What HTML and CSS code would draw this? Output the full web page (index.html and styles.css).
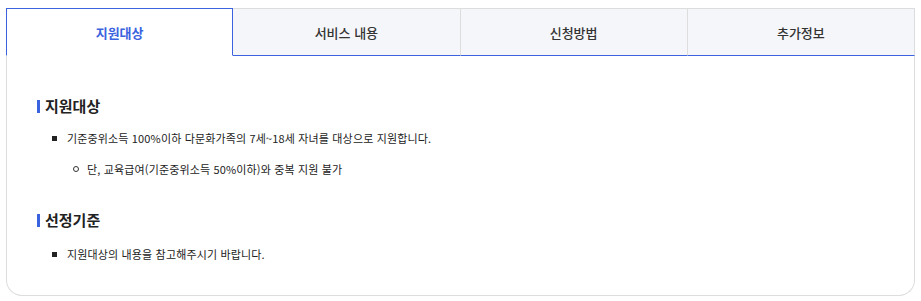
FILE: index.html
```html
<!DOCTYPE html>
<html lang="ko">
<head>
<meta charset="UTF-8">
<meta name="viewport" content="width=device-width, initial-scale=1.0">
<title>지원대상</title>
<link rel="stylesheet" href="styles.css">
</head>
<body>
<div class="info-box">
<ul class="tabs">
<li class="tab active">지원대상</li>
<li class="tab">서비스 내용</li>
<li class="tab">신청방법</li>
<li class="tab">추가정보</li>
</ul>
<div class="tab-content">
<h3 class="sub-title">지원대상</h3>
<ul class="list">
<li>기준중위소득 100%이하 다문화가족의 7세~18세 자녀를 대상으로 지원합니다.
<ul class="sub-list">
<li>단, 교육급여(기준중위소득 50%이하)와 중복 지원 불가</li>
</ul>
</li>
</ul>
<h3 class="sub-title">선정기준</h3>
<ul class="list last">
<li>지원대상의 내용을 참고해주시기 바랍니다.</li>
</ul>
</div>
</div>
</body>
</html>
```
FILE: styles.css
```css
body {
margin: 8px 6px;
font-family: "Noto Sans CJK KR", "Noto Sans", sans-serif;
color: #222;
background: #fff;
}
ul {
margin: 0;
padding: 0;
list-style: none;
}
.tabs {
display: grid;
grid-template-columns: repeat(4, 1fr);
}
.tab {
height: 46px;
display: flex;
align-items: center;
justify-content: center;
font-size: 13px;
font-weight: 500;
color: #333;
background: #f5f6fa;
border-top: 1px solid #ddd;
border-right: 1px solid #ddd;
border-bottom: 1px solid #3b63e0;
}
.tab.active {
background: #fff;
color: #3b63e0;
font-weight: 700;
border: 1px solid #3b63e0;
border-bottom-color: #fff;
}
.tab-content {
border: 1px solid #ddd;
border-top: none;
border-radius: 0 0 16px 16px;
padding: 39px 30px 30px;
height: 170px;
}
.sub-title {
margin: 0;
padding-left: 8px;
position: relative;
font-size: 15px;
font-weight: 700;
line-height: 22px;
color: #222;
}
.sub-title::before {
content: "";
position: absolute;
left: 0;
top: 5px;
width: 3px;
height: 13px;
background: #3b63e0;
}
.list {
margin: 11px 0 30px;
font-size: 11px;
line-height: 20px;
letter-spacing: 0.15px;
}
.list.last {
margin-top: 13px;
}
.list > li {
padding-left: 30px;
position: relative;
}
.list > li::before {
content: "";
position: absolute;
left: 15px;
top: 8px;
width: 5px;
height: 5px;
background: #222;
}
.sub-list {
margin-top: 11px;
}
.sub-list li {
padding-left: 20px;
position: relative;
}
.sub-list li::before {
content: "";
position: absolute;
left: 6px;
top: 7px;
width: 4px;
height: 4px;
border: 1px solid #333;
border-radius: 50%;
}
```
